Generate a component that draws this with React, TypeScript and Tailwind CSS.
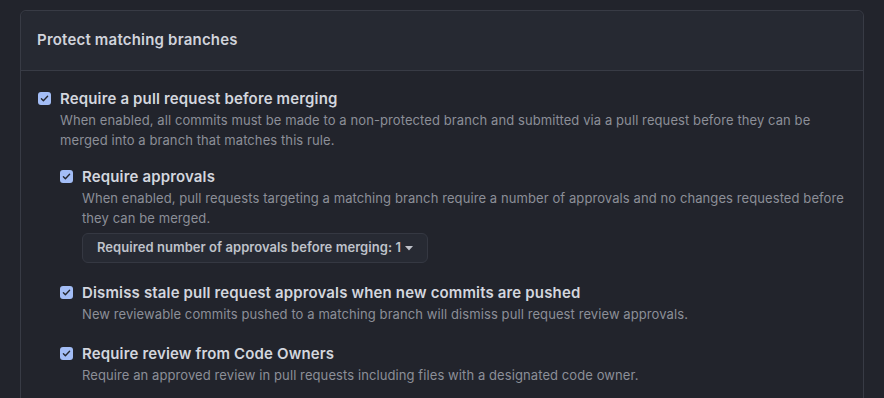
import React from "react";

function Check() {
  return (
    <span className="mt-[3px] flex h-[13px] w-[13px] shrink-0 items-center justify-center rounded-[3px] bg-[#a3bdf6]">
      <svg width="9" height="9" viewBox="0 0 16 16" fill="none">
        <path d="M2.5 8.5l3.5 3.5 7.5-8" stroke="#23262e" strokeWidth="2.4" strokeLinecap="round" strokeLinejoin="round" />
      </svg>
    </span>
  );
}

function Option({ title, desc, children }: { title: string; desc: React.ReactNode; children?: React.ReactNode }) {
  return (
    <div className="flex gap-[9px]">
      <Check />
      <div className="flex-1">
        <div className="text-[15px] font-semibold leading-[20px] tracking-[0.15px] text-[#d3d6de]">{title}</div>
        <div className="mt-[1px] text-[13px] leading-[20px] tracking-[0.09px] text-[#8c8f98]">{desc}</div>
        {children}
      </div>
    </div>
  );
}

export default function App() {
  return (
    <div className="min-h-[398px] w-full bg-[#22242c] pl-[20px] pr-[20px] pt-[10px]" style={{ fontFamily: "Inter, 'Noto Sans', sans-serif" }}>
      <div className="h-[400px] rounded-t-[6px] border border-[#383b45]">
        <div className="flex h-[60px] items-center rounded-t-[6px] border-b border-[#383b45] bg-[#262932] px-[16px]">
          <span className="text-[15px] font-semibold tracking-[0.2px] text-[#d0d3db]">Protect matching branches</span>
        </div>
        <div className="pl-[17px] pr-[12px] pt-[18px]">
          <Option
            title="Require a pull request before merging"
            desc={<>When enabled, all commits must be made to a non-protected branch and submitted via a pull request before they can be merged into a branch that matches this rule.</>}
          >
            <div className="mt-[17px] flex flex-col gap-[20px]">
              <Option
                title="Require approvals"
                desc="When enabled, pull requests targeting a matching branch require a number of approvals and no changes requested before they can be merged."
              >
                <button className="mt-[5px] flex h-[30px] items-center gap-[4px] rounded-[6px] border border-[#353842] bg-[#272a33] px-[14px] text-[13px] font-semibold tracking-[0.05px] text-[#bfc2ca]">
                  Required number of approvals before merging: 1
                  <svg width="8" height="5" viewBox="0 0 8 5"><path d="M0 0h8L4 4.5z" fill="#bfc2ca" /></svg>
                </button>
              </Option>
              <Option
                title="Dismiss stale pull request approvals when new commits are pushed"
                desc="New reviewable commits pushed to a matching branch will dismiss pull request review approvals."
              />
              <Option
                title="Require review from Code Owners"
                desc="Require an approved review in pull requests including files with a designated code owner."
              />
            </div>
          </Option>
        </div>
      </div>
    </div>
  );
}
